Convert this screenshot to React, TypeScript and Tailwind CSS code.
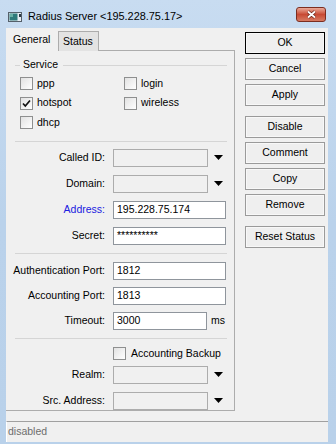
import React from "react";

const font = "font-['Liberation_Sans',Arial,sans-serif]";

function Check({ checked }: { checked?: boolean }) {
  return (
    <span className="w-[13px] h-[13px] border border-[#8e8f8f] bg-gradient-to-br from-[#e2e2e2] to-white flex items-center justify-center shrink-0">
      {checked && (
        <svg width="11" height="11" viewBox="0 0 11 11">
          <path d="M2 5.5 L4.3 8 L9 2.5" fill="none" stroke="#111" strokeWidth="1.7" />
        </svg>
      )}
    </span>
  );
}

function CheckRow({ label, checked }: { label: string; checked?: boolean }) {
  return (
    <div className="h-[19.5px] flex items-center gap-[4px]">
      <Check checked={checked} />
      <span>{label}</span>
    </div>
  );
}

function Arrow() {
  return (
    <svg width="9" height="5" viewBox="0 0 9 5" className="ml-[6px]">
      <polygon points="0,0 9,0 4.5,5" fill="#000" />
    </svg>
  );
}

function Row({ label, blue, children }: { label: string; blue?: boolean; children: React.ReactNode }) {
  return (
    <div className="h-[18px] flex items-center">
      <span className={`w-[100px] text-right pr-[1px] ${blue ? "text-[#2020e0]" : "text-black"}`}>{label}</span>
      <div className="ml-[7px] flex items-center">{children}</div>
    </div>
  );
}

function Combo() {
  return (
    <>
      <div className="w-[95px] h-[18px] border border-[#acacac] bg-[#f0f0f0]" />
      <Arrow />
    </>
  );
}

function Field({ value, w = "w-[113px]" }: { value: string; w?: string }) {
  return (
    <div className={`${w} h-[18px] border border-[#8f959c] bg-white flex items-center pl-[3px] text-black`}>{value}</div>
  );
}

function Sep() {
  return <div className="ml-[9px] w-[212px] h-px bg-[#d5d5d5]" />;
}

function Btn({ label, def }: { label: string; def?: boolean }) {
  return (
    <div
      className={`w-[80px] h-[22px] flex items-center justify-center border ${
        def ? "border-black" : "border-[#9a9a9a]"
      } bg-[#efefef] shadow-[inset_0_0_0_1px_#f8f8f8] text-black`}
    >
      {label}
    </div>
  );
}

export default function App() {
  return (
    <div className={`w-[336px] h-[444px] bg-gradient-to-b from-[#c8dcf1] via-[#bad2eb] to-[#b9d1ea] ${font} text-[10.5px] flex flex-col`}>
      {/* title bar */}
      <div className="h-[28px] flex items-center pl-[8px] pr-[10px] pt-[5px]">
        <svg width="14" height="10" viewBox="0 0 14 10">
          <rect x="0.5" y="0.5" width="13" height="9" fill="#e8eef4" stroke="#55606a" />
          <rect x="1.5" y="1.5" width="8" height="7" fill="#2f7a7a" />
          <rect x="2" y="2" width="3" height="3" fill="#69b0a6" />
          <rect x="11" y="2" width="2" height="3" fill="#2c3a46" />
        </svg>
        <span className="ml-[6px] text-[10.9px] text-black">Radius Server &lt;195.228.75.17&gt;</span>
        <div className="ml-auto w-[30px] h-[15px] rounded-[3px] border border-[#7c2d20] bg-gradient-to-b from-[#e9a999] via-[#c84a34] to-[#d67a62] flex items-center justify-center mb-[4px]">
          <svg width="11" height="9" viewBox="0 0 11 9">
            <path d="M2 1.5 L9 7.5 M9 1.5 L2 7.5" stroke="#6b2418" strokeWidth="3.2" />
            <path d="M2 1.5 L9 7.5 M9 1.5 L2 7.5" stroke="#fff" strokeWidth="1.8" />
          </svg>
        </div>
      </div>

      {/* client */}
      <div className="ml-[6px] w-[322px] h-[414px] bg-[#f0f0f0] flex flex-col">
        <div className="flex h-[392px]">
          {/* tab area */}
          <div className="w-[229px] flex flex-col">
            <div className="h-[23px] flex items-end">
              <div className="w-[52px] h-[23px] pl-[7px] pt-[4px] text-black">General</div>
              <div className="w-[41px] h-[20px] border border-b-0 border-[#acacac] bg-[#e3e3e3] pl-[4px] pt-[2px] text-black">Status</div>
              <div className="flex-1 border-b border-[#acacac] h-px self-end" />
            </div>
            <div className="flex-1 border-r border-b border-[#acacac] text-black">
              {/* service group */}
              <div className="mt-[7px] h-[14px] flex items-center">
                <div className="ml-[9px] w-[5px] h-px bg-[#d5d5d5]" />
                <span className="ml-[3px]">Service</span>
                <div className="ml-[5px] w-[164px] h-px bg-[#d5d5d5]" />
              </div>
              <div className="mt-[2px] ml-[14px] flex">
                <div className="w-[104px]">
                  <CheckRow label="ppp" />
                  <CheckRow label="hotspot" checked />
                  <CheckRow label="dhcp" />
                </div>
                <div>
                  <CheckRow label="login" />
                  <CheckRow label="wireless" />
                </div>
              </div>
              <div className="mt-[8px]">
                <Sep />
              </div>
              <div className="mt-[7px] flex flex-col gap-[8px]">
                <Row label="Called ID:">
                  <Combo />
                </Row>
                <Row label="Domain:">
                  <Combo />
                </Row>
                <Row label="Address:" blue>
                  <Field value="195.228.75.174" />
                </Row>
                <Row label="Secret:">
                  <Field value="**********" />
                </Row>
              </div>
              <div className="mt-[8px]">
                <Sep />
              </div>
              <div className="mt-[8px] flex flex-col gap-[7px]">
                <Row label="Authentication Port:">
                  <Field value="1812" />
                </Row>
                <Row label="Accounting Port:">
                  <Field value="1813" />
                </Row>
                <Row label="Timeout:">
                  <Field value="3000" w="w-[94px]" />
                  <span className="ml-[4px]">ms</span>
                </Row>
              </div>
              <div className="mt-[8px]">
                <Sep />
              </div>
              <div className="mt-[6px] ml-[107px] h-[18px] flex items-center gap-[5px]">
                <Check />
                <span>Accounting Backup</span>
              </div>
              <div className="mt-[3px] flex flex-col gap-[8px]">
                <Row label="Realm:">
                  <Combo />
                </Row>
                <Row label="Src. Address:">
                  <Combo />
                </Row>
              </div>
            </div>
          </div>

          {/* buttons */}
          <div className="ml-[10px] mt-[4px] flex flex-col gap-[4px]">
            <Btn label="OK" def />
            <Btn label="Cancel" />
            <Btn label="Apply" />
            <div className="h-[2px]" />
            <Btn label="Disable" />
            <Btn label="Comment" />
            <Btn label="Copy" />
            <Btn label="Remove" />
            <div className="h-[2px]" />
            <Btn label="Reset Status" />
          </div>
        </div>

        {/* status bar */}
        <div className="mt-[10px] h-[21px] border-t border-[#a0a0a0] border-l border-l-[#ffffff] flex items-center pl-[1px] text-[#6d6d6d]">
          disabled
        </div>
      </div>
    </div>
  );
}
